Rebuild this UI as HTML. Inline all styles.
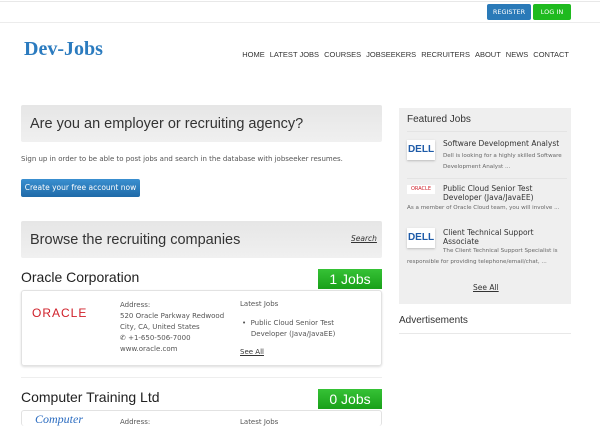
<!DOCTYPE html>
<html><head><meta charset="utf-8"><style>
*{margin:0;padding:0;box-sizing:border-box}
html,body{width:600px;height:426px;overflow:hidden}
body{background:#fff;font-family:"DejaVu Sans","Liberation Sans",sans-serif;color:#444;position:relative}
.a{position:absolute;white-space:nowrap}
.h{font-family:"Liberation Sans",sans-serif}
.bar{background:linear-gradient(#e6e6e6,#f0f0f0);border-radius:2px}
.nav span{margin-left:5px}
.s{font-size:7px;color:#555}
.badge{background:linear-gradient(#36c236,#19a019);color:#fff;font-size:14px;text-align:center;line-height:20px;font-family:"Liberation Sans",sans-serif}
.card{border:1px solid #e2e2e2;border-radius:3px;box-shadow:0 1px 2px #ddd}
.dell{background:#fff;box-shadow:0 1px 2px #bbb;color:#1e5ba8;font-weight:bold;font-size:10px;text-align:center;line-height:19px;font-family:"Liberation Sans",sans-serif}
</style></head><body>
<div class="a" style="left:0;top:1px;width:600px;height:1px;background:#e8e8e8"></div>
<div class="a" style="left:0;top:22px;width:600px;height:1px;background:#ececec"></div>
<div class="a" style="left:487px;top:4px;width:44px;height:16px;background:#2a7ab8;color:#fff;font-size:6.5px;text-align:center;line-height:16px;border-radius:2px">REGISTER</div>
<div class="a" style="left:533px;top:4px;width:38px;height:16px;background:#1fba1f;color:#fff;font-size:6.5px;text-align:center;line-height:16px;border-radius:2px">LOG IN</div>
<div class="a" style="left:24px;top:38px;font-family:'Liberation Serif',serif;font-weight:bold;font-size:20px;color:#2b7bbf">Dev-Jobs</div>
<div class="a nav h" style="right:31px;top:50px;font-size:7.5px;color:#333"><span>HOME</span><span>LATEST JOBS</span><span>COURSES</span><span>JOBSEEKERS</span><span>RECRUITERS</span><span>ABOUT</span><span>NEWS</span><span>CONTACT</span></div>

<div class="a bar" style="left:21px;top:105px;width:361px;height:37px"></div>
<div class="a h" style="left:30px;top:116px;font-size:14.5px;color:#333">Are you an employer or recruiting agency?</div>
<div class="a s" style="left:21px;top:155px">Sign up in order to be able to post jobs and search in the database with jobseeker resumes.</div>
<div class="a" style="left:21px;top:179px;width:119px;height:18px;background:linear-gradient(#3a8fd0,#1f6aa8);border-radius:2px;color:#fff;font-size:7.5px;line-height:18px;text-align:center">Create your free account now</div>

<div class="a bar" style="left:21px;top:221px;width:361px;height:37px"></div>
<div class="a h" style="left:30px;top:232px;font-size:14.5px;color:#333">Browse the recruiting companies</div>
<div class="a" style="left:351px;top:234px;font-size:7.5px;font-style:italic;text-decoration:underline;color:#333">Search</div>

<div class="a h" style="left:21px;top:269px;font-size:14px;color:#222">Oracle Corporation</div>
<div class="a badge" style="left:318px;top:269px;width:64px;height:20px">1 Jobs</div>
<div class="a card" style="left:21px;top:290px;width:361px;height:76px"></div>
<div class="a" style="left:32px;top:306px;font-family:'Liberation Sans',sans-serif;font-size:12px;color:#d0202a;letter-spacing:1px">ORACLE</div>
<div class="a s" style="left:120px;top:300px;line-height:11px">Address:<br>520 Oracle Parkway Redwood<br>City, CA, United States<br>&#9990; +1-650-506-7000<br>www.oracle.com</div>
<div class="a s" style="left:240px;top:300px">Latest Jobs</div>
<div class="a s" style="left:242px;top:318px;line-height:11px">•&nbsp; Public Cloud Senior Test<br>&nbsp;&nbsp;&nbsp;&nbsp;Developer (Java/JavaEE)</div>
<div class="a s" style="left:240px;top:348px;text-decoration:underline;color:#333">See All</div>
<div class="a" style="left:21px;top:377px;width:361px;height:1px;background:#eee"></div>

<div class="a h" style="left:21px;top:389px;font-size:14px;color:#222">Computer Training Ltd</div>
<div class="a badge" style="left:318px;top:389px;width:64px;height:20px">0 Jobs</div>
<div class="a card" style="left:21px;top:410px;width:361px;height:16px;border-bottom:none;box-shadow:none"></div>
<div class="a" style="left:35px;top:412px;font-family:'Liberation Serif',serif;font-style:italic;font-size:12px;color:#2b6cc0;line-height:14px">Computer</div>
<div class="a s" style="left:120px;top:418px;line-height:8px">Address:</div>
<div class="a s" style="left:240px;top:418px;line-height:8px">Latest Jobs</div>

<div class="a" style="left:399px;top:108px;width:172px;height:196px;background:#efefef"></div>
<div class="a h" style="left:407px;top:114px;font-size:10px;color:#333">Featured Jobs</div>
<div class="a" style="left:407px;top:131px;width:160px;height:1px;background:#e4e4e4"></div>
<div class="a dell" style="left:407px;top:140px;width:28px;height:20px">DELL</div>
<div class="a" style="left:443px;top:139px;font-size:7.5px;color:#333">Software Development Analyst</div>
<div class="a" style="left:443px;top:151px;font-size:5.6px;color:#666;line-height:11px">Dell is looking for a highly skilled Software<br>Development Analyst ...</div>
<div class="a" style="left:407px;top:178px;width:160px;height:1px;background:#e4e4e4"></div>
<div class="a" style="left:407px;top:185px;width:28px;height:9px;background:#fff;color:#d0202a;font-size:5px;text-align:center;line-height:9px">ORACLE</div>
<div class="a" style="left:443px;top:184px;font-size:7.5px;color:#333;line-height:9px">Public Cloud Senior Test<br>Developer (Java/JavaEE)</div>
<div class="a" style="left:407px;top:205px;font-size:5.6px;color:#666">As a member of Oracle Cloud team, you will involve ...</div>
<div class="a dell" style="left:407px;top:228px;width:28px;height:20px">DELL</div>
<div class="a" style="left:443px;top:228px;font-size:7.5px;color:#333;line-height:9px">Client Technical Support<br>Associate</div>
<div class="a" style="left:443px;top:248px;font-size:5.6px;color:#666">The Client Technical Support Specialist is</div>
<div class="a" style="left:407px;top:259px;font-size:5.6px;color:#666">responsible for providing telephone/email/chat, ...</div>
<div class="a" style="left:473px;top:283px;font-size:7.5px;color:#333;text-decoration:underline">See All</div>
<div class="a h" style="left:399px;top:315px;font-size:10px;color:#333">Advertisements</div>
<div class="a" style="left:399px;top:333px;width:172px;height:1px;background:#e8e8e8"></div>
</body></html>
